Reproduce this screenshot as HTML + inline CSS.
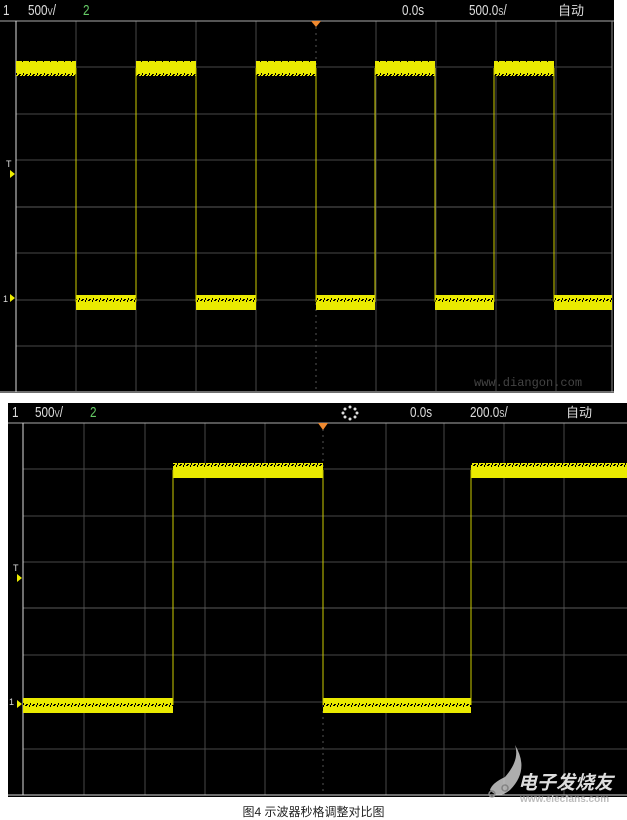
<!DOCTYPE html>
<html><head><meta charset="utf-8">
<style>
html,body{margin:0;padding:0;background:#fff;width:627px;height:820px;overflow:hidden;position:relative;font-family:"Liberation Sans","Noto Sans CJK SC",sans-serif}
.t{position:absolute;color:#ddd;font-size:15px;line-height:17px;transform:scaleX(0.78);transform-origin:left top;white-space:nowrap}
.g{color:#6c6}
svg{position:absolute;left:0;top:0}
.cap{position:absolute;left:0;width:627px;top:803px;text-align:center;font-size:12px;color:#222}
</style></head><body>
<svg width="627" height="820" viewBox="0 0 627 820">
<defs>
<pattern id="nz" width="7" height="15" patternUnits="userSpaceOnUse">
<rect width="7" height="15" fill="#eaea00"/>
<rect x="1" y="0" width="1" height="2" fill="#000"/><rect x="4" y="0" width="2" height="1" fill="#000"/>
<rect x="2" y="13" width="1" height="2" fill="#000"/><rect x="5" y="14" width="2" height="1" fill="#000"/>
</pattern>
</defs>
<!-- scope 1 -->
<rect x="0" y="0" width="614" height="393" fill="#000"/>
<g stroke="#484848" stroke-width="1">
<line x1="76" y1="21" x2="76" y2="391"/><line x1="136" y1="21" x2="136" y2="391"/><line x1="196" y1="21" x2="196" y2="391"/><line x1="256" y1="21" x2="256" y2="391"/>
<line x1="376" y1="21" x2="376" y2="391"/><line x1="436" y1="21" x2="436" y2="391"/><line x1="496" y1="21" x2="496" y2="391"/><line x1="556" y1="21" x2="556" y2="391"/>
<line x1="16" y1="67" x2="612" y2="67"/><line x1="16" y1="114" x2="612" y2="114"/><line x1="16" y1="160" x2="612" y2="160"/>
<line x1="16" y1="253" x2="612" y2="253"/><line x1="16" y1="300" x2="612" y2="300"/><line x1="16" y1="346" x2="612" y2="346"/>
</g>
<line x1="16" y1="207" x2="612" y2="207" stroke="#5a5a5a"/>
<line x1="316" y1="21" x2="316" y2="391" stroke="#555" stroke-dasharray="2,4"/>
<line x1="0" y1="21" x2="614" y2="21" stroke="#aaa"/>
<line x1="16" y1="21" x2="16" y2="392" stroke="#ddd"/>
<line x1="612" y1="21" x2="612" y2="392" stroke="#888"/>
<line x1="0" y1="392" x2="614" y2="392" stroke="#ddd"/>
<g fill="url(#nz)">
<rect x="16" y="61" width="60" height="15"/><rect x="136" y="61" width="60" height="15"/><rect x="256" y="61" width="60" height="15"/><rect x="375" y="61" width="60" height="15"/><rect x="494" y="61" width="60" height="15"/>
<rect x="76" y="295" width="60" height="15"/><rect x="196" y="295" width="60" height="15"/><rect x="316" y="295" width="59" height="15"/><rect x="435" y="295" width="59" height="15"/><rect x="554" y="295" width="58" height="15"/>
</g>
<g stroke="#cc0" stroke-width="1">
<line x1="76" y1="68" x2="76" y2="302"/><line x1="136" y1="68" x2="136" y2="302"/><line x1="196" y1="68" x2="196" y2="302"/><line x1="256" y1="68" x2="256" y2="302"/><line x1="316" y1="68" x2="316" y2="302"/><line x1="375" y1="68" x2="375" y2="302"/><line x1="435" y1="68" x2="435" y2="302"/><line x1="494" y1="68" x2="494" y2="302"/><line x1="554" y1="68" x2="554" y2="302"/>
</g>
<polygon points="311,21 321,21 316,27" fill="#f08a30"/>
<polygon points="10,170 15,174 10,178" fill="#ee0"/>
<polygon points="10,294 15,298 10,302" fill="#ee0"/>
<text x="6" y="167" fill="#ddd" font-size="9" font-family="Liberation Sans">T</text>
<text x="3" y="302" fill="#ddd" font-size="9" font-family="Liberation Sans">1</text>
<text x="474" y="386" fill="#444" font-size="12" font-family="Liberation Mono">www.diangon.com</text>
<!-- scope 2 -->
<rect x="8" y="403" width="619" height="394" fill="#000"/>
<g stroke="#484848" stroke-width="1">
<line x1="84" y1="423" x2="84" y2="795"/><line x1="145" y1="423" x2="145" y2="795"/><line x1="205" y1="423" x2="205" y2="795"/><line x1="265" y1="423" x2="265" y2="795"/>
<line x1="386" y1="423" x2="386" y2="795"/><line x1="444" y1="423" x2="444" y2="795"/><line x1="504" y1="423" x2="504" y2="795"/><line x1="564" y1="423" x2="564" y2="795"/>
<line x1="23" y1="469" x2="627" y2="469"/><line x1="23" y1="516" x2="627" y2="516"/><line x1="23" y1="562" x2="627" y2="562"/>
<line x1="23" y1="655" x2="627" y2="655"/><line x1="23" y1="702" x2="627" y2="702"/><line x1="23" y1="749" x2="627" y2="749"/>
</g>
<line x1="23" y1="608" x2="627" y2="608" stroke="#5a5a5a"/>
<line x1="323" y1="423" x2="323" y2="795" stroke="#555" stroke-dasharray="2,4"/>
<line x1="8" y1="423" x2="627" y2="423" stroke="#aaa"/>
<line x1="23" y1="423" x2="23" y2="795" stroke="#ddd"/>
<line x1="8" y1="795" x2="627" y2="795" stroke="#ddd"/>
<g fill="url(#nz)">
<rect x="23" y="698" width="150" height="15"/><rect x="323" y="698" width="148" height="15"/>
<rect x="173" y="463" width="150" height="15"/><rect x="471" y="463" width="156" height="15"/>
</g>
<g stroke="#cc0"><line x1="173" y1="470" x2="173" y2="705"/><line x1="323" y1="470" x2="323" y2="705"/><line x1="471" y1="470" x2="471" y2="705"/></g>
<polygon points="318,423 328,423 323,430" fill="#f08a30"/>
<polygon points="17,574 22,578 17,582" fill="#ee0"/>
<polygon points="17,700 22,704 17,708" fill="#ee0"/>
<text x="13" y="571" fill="#ddd" font-size="9" font-family="Liberation Sans">T</text>
<text x="9" y="705" fill="#ddd" font-size="9" font-family="Liberation Sans">1</text>
<g fill="#ddd"><circle cx="350" cy="407" r="1.5"/><circle cx="355" cy="409" r="1.5"/><circle cx="357" cy="413" r="1.5"/><circle cx="355" cy="417" r="1.5"/><circle cx="350" cy="419" r="1.5"/><circle cx="345" cy="417" r="1.5"/><circle cx="343" cy="413" r="1.5"/><circle cx="345" cy="409" r="1.5"/></g>
<!-- logo -->
<g opacity="0.85">
<path d="M505 777 Q520 760 515 745 Q530 770 510 790 Q498 800 490 790 Q492 783 505 777Z" fill="#ccc"/>
<circle cx="492" cy="794" r="3" fill="none" stroke="#999" stroke-width="1.5"/>
<circle cx="505" cy="788" r="3" fill="none" stroke="#999" stroke-width="1.5"/>
</g>
</svg>
<div class="t" style="left:3px;top:2px">1</div>
<div class="t" style="left:28px;top:2px">500<span style="font-size:10px">V</span>/</div>
<div class="t g" style="left:83px;top:2px">2</div>
<div class="t" style="left:402px;top:2px">0.0s</div>
<div class="t" style="left:469px;top:2px">500.0<span style="font-size:10px">S</span>/</div>
<div class="t" style="left:558px;top:2px;font-size:13px;transform:none">自动</div>
<div class="t" style="left:12px;top:404px">1</div>
<div class="t" style="left:35px;top:404px">500<span style="font-size:10px">V</span>/</div>
<div class="t g" style="left:90px;top:404px">2</div>
<div class="t" style="left:410px;top:404px">0.0s</div>
<div class="t" style="left:470px;top:404px">200.0<span style="font-size:10px">S</span>/</div>
<div class="t" style="left:566px;top:404px;font-size:13px;transform:none">自动</div>
<div style="position:absolute;left:518px;top:768px;font-size:19px;color:#ddd;font-style:italic;font-weight:bold">电子发烧友</div>
<div style="position:absolute;left:520px;top:794px;font-size:10px;color:#bbb;font-weight:bold">www.elecfans.com</div>
<div class="cap">图4 示波器秒格调整对比图</div>
</body></html>
